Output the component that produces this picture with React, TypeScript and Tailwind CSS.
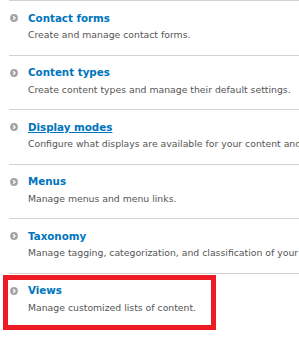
import React from "react";

const items = [
  { title: "Contact forms", desc: "Create and manage contact forms.", u: false },
  { title: "Content types", desc: "Create content types and manage their default settings.", u: false },
  { title: "Display modes", desc: "Configure what displays are available for your content and forms.", u: true },
  { title: "Menus", desc: "Manage menus and menu links.", u: false },
  { title: "Taxonomy", desc: "Manage tagging, categorization, and classification of your content.", u: false },
  { title: "Views", desc: "Manage customized lists of content.", u: false },
];

function Icon() {
  return (
    <svg width="8" height="8" viewBox="0 0 8 8" className="ml-[1px] mr-[10px] shrink-0">
      <circle cx="4" cy="4" r="3.9" fill="#a3a3a3" />
      <path d="M3.2 2.2 L5 4 L3.2 5.8" fill="none" stroke="#ffffff" strokeWidth="1.3" />
    </svg>
  );
}

export default function App() {
  return (
    <div
      className="relative w-[299px] h-[342px] overflow-hidden bg-white"
      style={{ fontFamily: '"DejaVu Sans", Verdana, sans-serif' }}
    >
      <div className="pl-[9px]">
        {items.map((it) => (
          <div key={it.title} className="h-[54.5px] border-t border-[#d2d2d2] whitespace-nowrap">
            <div className="flex items-center pt-[10.8px] h-[23.8px] leading-[13px] text-[10.3px] font-bold text-[#0074bd]">
              <Icon />
              <span className={it.u ? "underline" : ""}>{it.title}</span>
            </div>
            <div className="mt-[4.7px] pl-[19px] leading-[12px] text-[9.3px] text-[#555555]">{it.desc}</div>
          </div>
        ))}
      </div>
      <div className="absolute left-[3px] top-[275px] w-[213px] h-[55px] border-[5px] border-[#ed1c24]" />
    </div>
  );
}
